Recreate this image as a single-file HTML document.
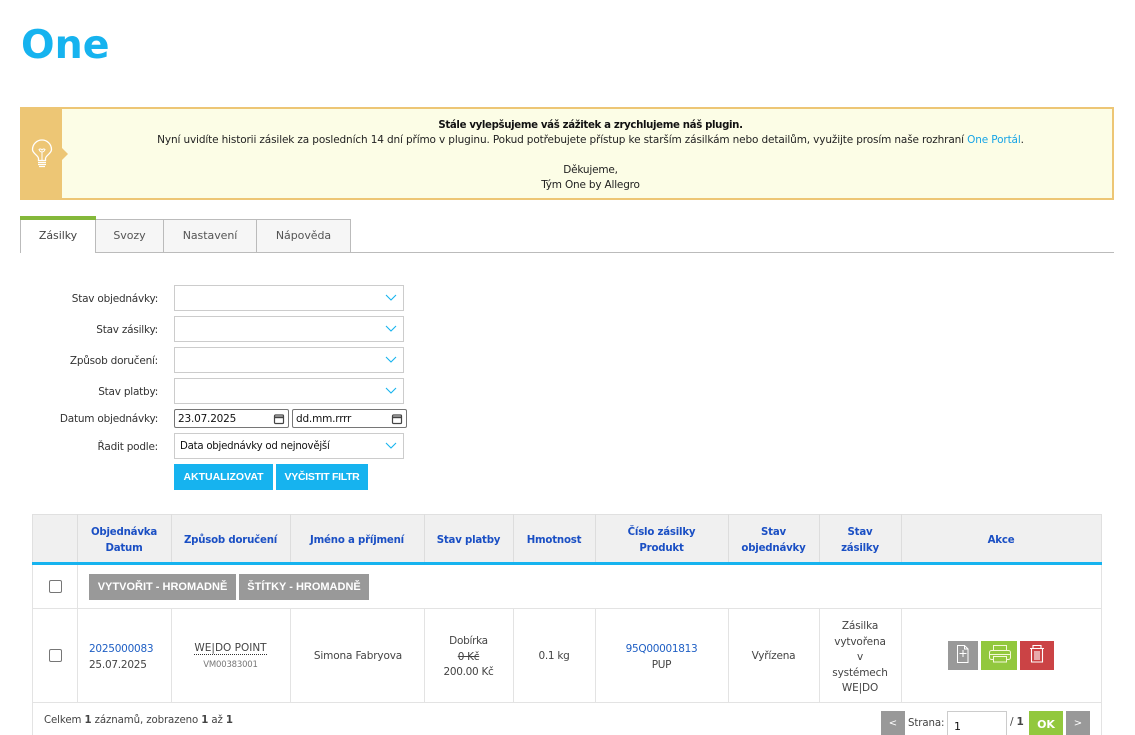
<!DOCTYPE html>
<html lang="cs"><head><meta charset="utf-8"><title>One</title>
<style>
html,body{margin:0;padding:0;background:#fff;width:1135px;height:735px;overflow:hidden}
body{position:relative;font:10.5px/15px "DejaVu Sans",sans-serif;color:#444;letter-spacing:-.2px}
body *{box-sizing:border-box}
.a{position:absolute}
.t{position:absolute;white-space:nowrap;text-align:center}
.r{position:absolute;white-space:nowrap;text-align:right;color:#333;left:30px;width:128px;letter-spacing:-.23px}
.sel{position:absolute;left:174px;width:230px;height:26px;border:1px solid #ccc;background:#fff}
.sel svg{position:absolute;right:6px;top:8px}
.date{position:absolute;top:409px;height:19px;width:115px;border:1px solid #767676;border-radius:2px;color:#111;font:10.5px/19px "DejaVu Sans",sans-serif;padding-left:3px;letter-spacing:-.2px}
.date svg{position:absolute;right:3px;top:3px}
.btn{position:absolute;color:#fff;font-weight:bold;text-align:center;white-space:nowrap;letter-spacing:0}
.blue{background:#16b3ef;top:464px;height:26px;line-height:27px;font-size:10.5px;font-family:"Liberation Sans",sans-serif}
.grey{background:#999;top:574px;height:26px;line-height:27px;font-size:11px;font-family:"Liberation Sans",sans-serif}
.v{position:absolute;width:1px;background:#e3e3e3}
.h{position:absolute;height:1px;background:#e3e3e3}
.th{position:absolute;text-align:center;color:#1a4fc4;font-weight:bold;font-size:10.2px;line-height:16px;white-space:nowrap;letter-spacing:-.2px}
.tab{position:absolute;top:219px;height:34px;background:#f6f6f6;border:1px solid #bbb;border-left:0;text-align:center;line-height:32px;color:#555;font-size:11px;letter-spacing:-.05px}
a{color:inherit;text-decoration:none}
.c{position:absolute;width:13px;height:13px;border:1px solid #767676;border-radius:2px;background:#fff}
.lk{color:#1f5fc4}
</style></head><body>

<div class="a" style="left:21px;top:18px;font:bold 39.5px/54px 'DejaVu Sans',sans-serif;color:#16b3ef;letter-spacing:0">One</div>

<!-- banner -->
<div class="a" style="left:20px;top:107px;width:1094px;height:93px;border:2px solid #edc675;background:#fcfde6"></div>
<div class="a" style="left:20px;top:107px;width:42px;height:93px;background:#edc675"></div>
<div class="a" style="left:62px;top:148px;width:0;height:0;border-left:6px solid #edc675;border-top:6px solid transparent;border-bottom:6px solid transparent"></div>
<svg class="a" style="left:31px;top:139px" width="22" height="30" viewBox="0 0 22 30" fill="none" stroke="#fff" stroke-width="1.3">
<path d="M7.500 21.500v-2C7.500 16.500 1.500 14.500 1.500 10.500a9.500 9.500 0 0 1 19 0C20.500 14.500 14.500 16.500 14.500 19.500v2z"/>
<path d="M11 21v-8M8 10.500c.8 2 2 2.500 3 2.500s2.200-.5 3-2.500c-1-1-2.300-.5-3 .5-.7-1-2-1.500-3-.5z" stroke-width="1"/>
<path d="M7 23.500h8M7 25.500h8M8 27.500h6" stroke-width="1.200"/></svg>
<div class="t" style="left:62px;width:1057px;top:118px;font-weight:bold;color:#111;font-size:10.2px;letter-spacing:-.35px">Stále vylepšujeme váš zážitek a zrychlujeme náš plugin.</div>
<div class="t" style="left:62px;width:1057px;top:133px;color:#222;letter-spacing:-.14px">Nyní uvidíte historii zásilek za posledních 14 dní přímo v pluginu. Pokud potřebujete přístup ke starším zásilkám nebo detailům, využijte prosím naše rozhraní <a style="color:#16a4e6" href="#">One Portál</a>.</div>
<div class="t" style="left:62px;width:1057px;top:163px;color:#222">Děkujeme,</div>
<div class="t" style="left:62px;width:1057px;top:178px;color:#222">Tým One by Allegro</div>

<!-- tabs -->
<div class="a" style="left:96px;top:252px;width:1018px;height:1px;background:#bbb"></div>
<div class="tab" style="left:20px;width:76px;background:#fff;border-left:1px solid #bbb;border-bottom:0;border-top:0;top:216px;height:37px;line-height:40px;color:#444">Zásilky</div>
<div class="a" style="left:20px;top:216px;width:76px;height:4px;background:#84b83a"></div>
<div class="tab" style="left:96px;width:68px">Svozy</div>
<div class="tab" style="left:164px;width:93px">Nastavení</div>
<div class="tab" style="left:257px;width:94px">Nápověda</div>

<!-- filters -->
<div class="r" style="top:292px">Stav objednávky:</div>
<div class="r" style="top:323px">Stav zásilky:</div>
<div class="r" style="top:354px">Způsob doručení:</div>
<div class="r" style="top:385px">Stav platby:</div>
<div class="r" style="top:412px">Datum objednávky:</div>
<div class="r" style="top:440px">Řadit podle:</div>

<div class="sel" style="top:285px"><svg width="12" height="8" viewBox="0 0 12 8" fill="none" stroke="#16b3ef" stroke-width="1.100"><path d="M1 1l5 5 5-5"/></svg></div>
<div class="sel" style="top:316px"><svg width="12" height="8" viewBox="0 0 12 8" fill="none" stroke="#16b3ef" stroke-width="1.100"><path d="M1 1l5 5 5-5"/></svg></div>
<div class="sel" style="top:347px"><svg width="12" height="8" viewBox="0 0 12 8" fill="none" stroke="#16b3ef" stroke-width="1.100"><path d="M1 1l5 5 5-5"/></svg></div>
<div class="sel" style="top:378px"><svg width="12" height="8" viewBox="0 0 12 8" fill="none" stroke="#16b3ef" stroke-width="1.100"><path d="M1 1l5 5 5-5"/></svg></div>
<div class="date" style="left:174px">23.07.2025<svg width="12" height="12" viewBox="0 0 12 12" fill="none" stroke="#444" stroke-width="1.200"><rect x="1.500" y="2" width="9" height="8.500" rx="1"/><path d="M1.500 4.300h9" stroke-width="1.800"/></svg></div>
<div class="date" style="left:292px">dd.mm.rrrr<svg width="12" height="12" viewBox="0 0 12 12" fill="none" stroke="#444" stroke-width="1.200"><rect x="1.500" y="2" width="9" height="8.500" rx="1"/><path d="M1.500 4.300h9" stroke-width="1.800"/></svg></div>
<div class="sel" style="top:433px;color:#111;line-height:26px;padding-left:5px;font-size:10.2px;letter-spacing:-.25px;overflow:hidden">Data objednávky od nejnovější<svg width="12" height="8" viewBox="0 0 12 8" fill="none" stroke="#16b3ef" stroke-width="1.100"><path d="M1 1l5 5 5-5"/></svg></div>
<div class="btn blue" style="left:174px;width:99px">AKTUALIZOVAT</div>
<div class="btn blue" style="left:276px;width:92px;letter-spacing:-.3px">VYČISTIT FILTR</div>

<!-- table -->
<div class="a" style="left:32px;top:514px;width:1070px;height:48px;background:#f0f0f0;border:1px solid #e0e0e0;border-bottom:0"></div>
<div class="a" style="left:32px;top:562px;width:1070px;height:3px;background:#16b3ef"></div>
<div class="v" style="left:32px;top:565px;height:170px"></div>
<div class="v" style="left:1101px;top:565px;height:170px"></div>
<div class="h" style="left:32px;top:608px;width:1070px"></div>
<div class="h" style="left:32px;top:702px;width:1070px"></div>
<div class="v" style="left:77px;top:514px;height:48px;background:#ddd"></div>
<div class="v" style="left:171px;top:514px;height:48px;background:#ddd"></div>
<div class="v" style="left:290px;top:514px;height:48px;background:#ddd"></div>
<div class="v" style="left:424px;top:514px;height:48px;background:#ddd"></div>
<div class="v" style="left:513px;top:514px;height:48px;background:#ddd"></div>
<div class="v" style="left:595px;top:514px;height:48px;background:#ddd"></div>
<div class="v" style="left:728px;top:514px;height:48px;background:#ddd"></div>
<div class="v" style="left:819px;top:514px;height:48px;background:#ddd"></div>
<div class="v" style="left:901px;top:514px;height:48px;background:#ddd"></div>
<div class="v" style="left:77px;top:565px;height:137px"></div>
<div class="v" style="left:171px;top:608px;height:94px"></div>
<div class="v" style="left:290px;top:608px;height:94px"></div>
<div class="v" style="left:424px;top:608px;height:94px"></div>
<div class="v" style="left:513px;top:608px;height:94px"></div>
<div class="v" style="left:595px;top:608px;height:94px"></div>
<div class="v" style="left:728px;top:608px;height:94px"></div>
<div class="v" style="left:819px;top:608px;height:94px"></div>
<div class="v" style="left:901px;top:608px;height:94px"></div>

<div class="th" style="left:77px;width:94px;top:525px">Objednávka<br>Datum</div>
<div class="th" style="left:171px;width:119px;top:533px">Způsob doručení</div>
<div class="th" style="left:290px;width:134px;top:533px">Jméno a příjmení</div>
<div class="th" style="left:424px;width:89px;top:533px">Stav platby</div>
<div class="th" style="left:513px;width:82px;top:533px">Hmotnost</div>
<div class="th" style="left:595px;width:133px;top:525px">Číslo zásilky<br>Produkt</div>
<div class="th" style="left:728px;width:91px;top:525px">Stav<br>objednávky</div>
<div class="th" style="left:819px;width:82px;top:525px">Stav<br>zásilky</div>
<div class="th" style="left:901px;width:200px;top:533px">Akce</div>

<div class="c" style="left:49px;top:580px"></div>
<div class="btn grey" style="left:89px;width:147px">VYTVOŘIT - HROMADNĚ</div>
<div class="btn grey" style="left:239px;width:130px">ŠTÍTKY - HROMADNĚ</div>

<div class="c" style="left:49px;top:649px"></div>
<div class="t" style="left:89px;top:641px;text-align:left;line-height:16px;letter-spacing:-.25px"><span class="lk">2025000083</span><br>25.07.2025</div>
<div class="t" style="left:171px;width:119px;top:641px;line-height:15px;letter-spacing:0"><span style="border-bottom:1px dotted #333">WE|DO POINT</span></div>
<div class="t" style="left:171px;width:119px;top:658px;font-size:8.5px;color:#777;letter-spacing:-.2px">VM00383001</div>
<div class="t" style="left:291px;width:134px;top:649px;letter-spacing:-.15px">Simona Fabryova</div>
<div class="t" style="left:424px;width:89px;top:634px;line-height:15.5px;letter-spacing:-.3px">Dobírka<br><s>0 Kč</s><br>200.00 Kč</div>
<div class="t" style="left:513px;width:82px;top:649px;letter-spacing:-.3px">0.1 kg</div>
<div class="t" style="left:595px;width:133px;top:641px;line-height:16px;letter-spacing:-.3px"><span class="lk">95Q00001813</span><br>PUP</div>
<div class="t" style="left:728px;width:91px;top:649px;letter-spacing:-.2px">Vyřízena</div>
<div class="t" style="left:819px;width:82px;top:619px;line-height:15.5px;letter-spacing:-.15px">Zásilka<br>vytvořena<br>v<br>systémech<br>WE|DO</div>

<div class="a" style="left:948px;top:641px;width:30px;height:29px;background:#999"></div>
<svg class="a" style="left:948px;top:641px" width="30" height="29" viewBox="0 0 30 29" fill="none" stroke="#fff" stroke-width="1"><path d="M9.500 4.500h7l3.500 3.500v13.500H9.500zM16.500 4.500V8H20M15 9v7M11.500 12.500h7"/></svg>
<div class="a" style="left:981px;top:641px;width:36px;height:29px;background:#92c83e"></div>
<svg class="a" style="left:981px;top:641px" width="36" height="29" viewBox="0 0 36 29" fill="none" stroke="#f4f8d8" stroke-width="1"><path d="M12.500 9.500v-5h13v5M12 18.500h-1.500a2 2 0 0 1-2-2v-5a2 2 0 0 1 2-2h17a2 2 0 0 1 2 2v5a2 2 0 0 1-2 2H26M12.500 15.500h13v5.500h-13zM9 13.500h20"/></svg>
<div class="a" style="left:1020px;top:641px;width:34px;height:29px;background:#cb4345"></div>
<svg class="a" style="left:1020px;top:641px" width="34" height="29" viewBox="0 0 34 29" fill="none" stroke="#fff" stroke-width="1.100"><path d="M10 7.500h14M13 7.500v-3h8v3M11.500 7.500v13.500h11V7.500M15 10v9M17 10v9M19 10v9"/></svg>

<div class="t" style="left:44px;top:713px;font-size:10.2px;letter-spacing:-.1px">Celkem <b>1</b> záznamů, zobrazeno <b>1</b> až <b>1</b></div>
<div class="btn" style="left:881px;top:711px;width:24px;height:24px;background:#999;line-height:26px;font-size:10px;font-weight:normal">&lt;</div>
<div class="t" style="left:908px;top:716px;font-size:10.2px;letter-spacing:-.1px">Strana:</div>
<div class="a" style="left:947px;top:711px;width:60px;height:24px;border:1px solid #ccc;border-bottom:0;background:#fff;color:#111;padding:7px 0 0 6px;font-size:11px">1</div>
<div class="t" style="left:1010px;top:715px">/ <b>1</b></div>
<div class="btn" style="left:1029px;top:711px;width:34px;height:24px;background:#92c83e;line-height:27px;font-size:11px">OK</div>
<div class="btn" style="left:1066px;top:711px;width:24px;height:24px;background:#999;line-height:26px;font-size:10px;font-weight:normal">&gt;</div>

</body></html>
